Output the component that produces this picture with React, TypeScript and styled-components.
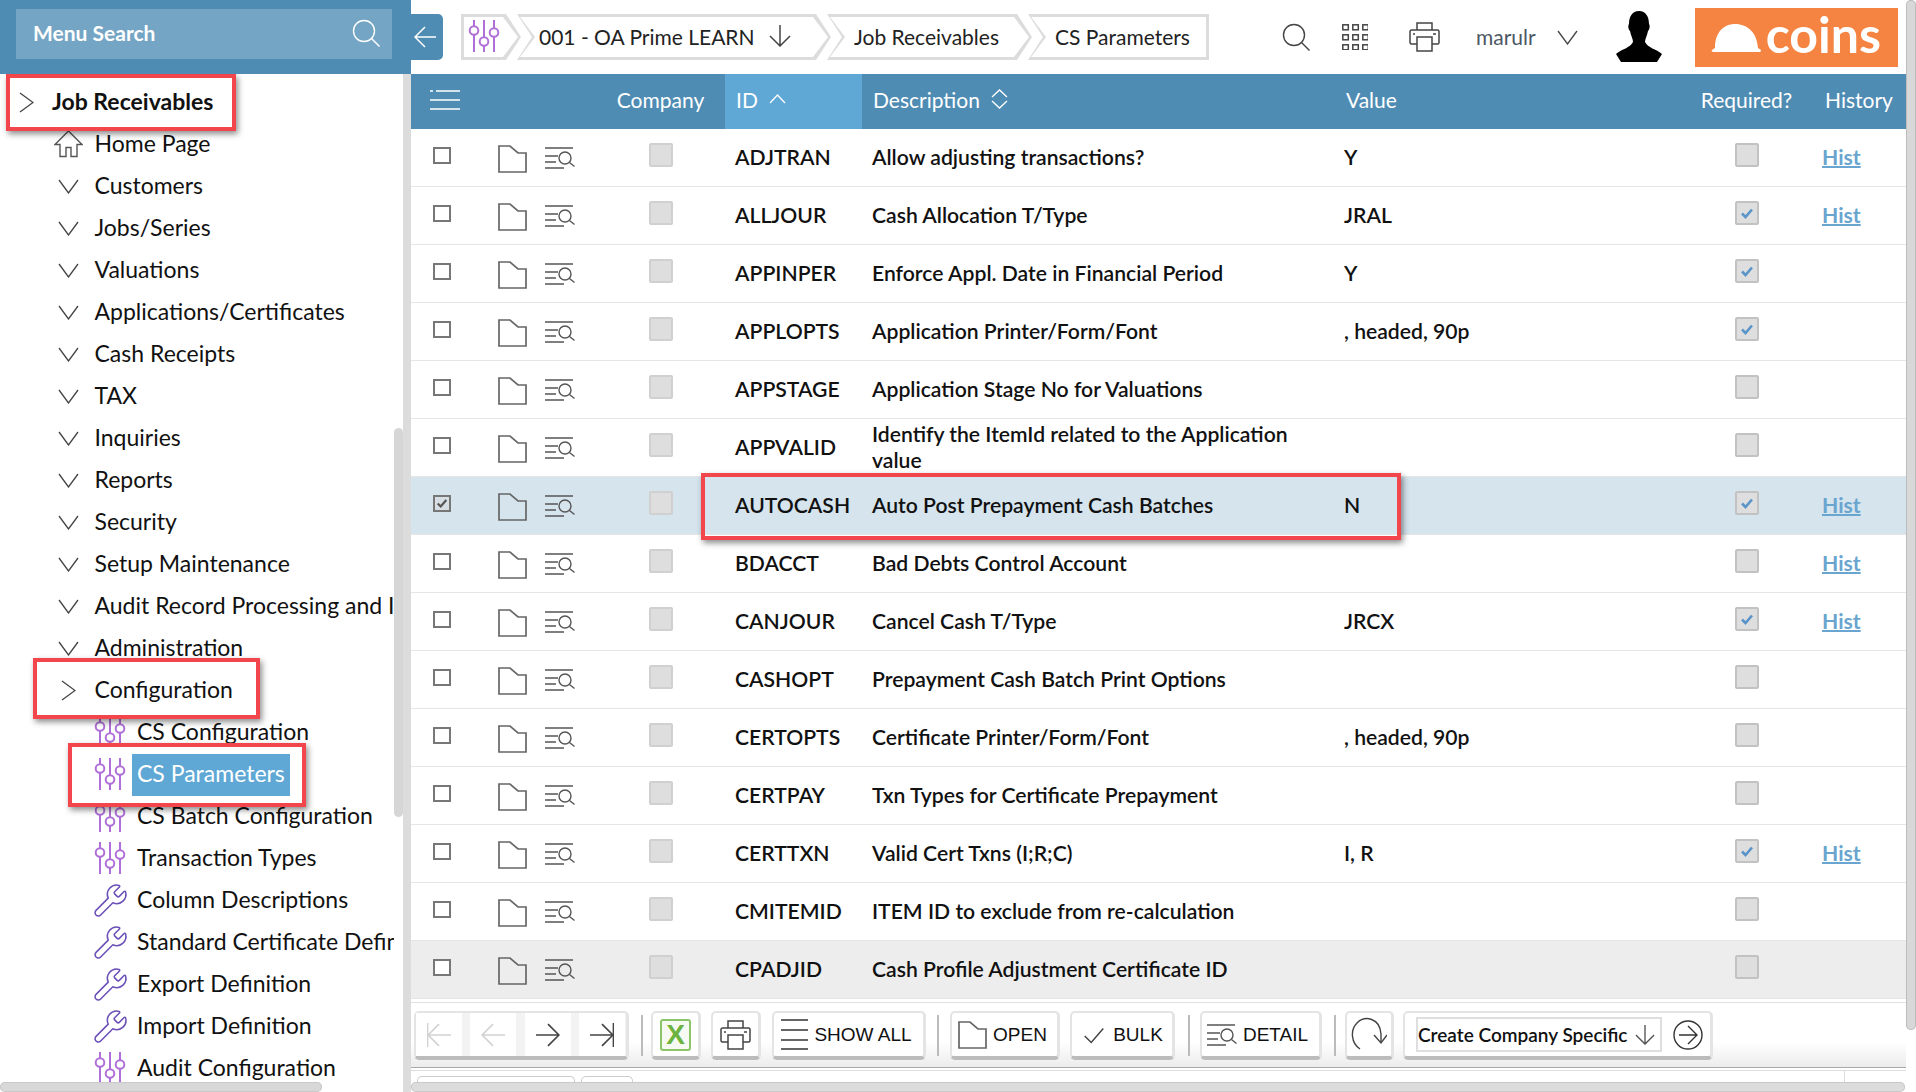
import { Fragment } from 'react';
import styled, { createGlobalStyle, css } from 'styled-components';
import { Wrench } from 'lucide-react';

const GlobalStyle = createGlobalStyle`
	html, body {
		margin: 0;
		padding: 0;
		background: #fff;
		overflow: hidden;
		font-family: Lato, "Liberation Sans", sans-serif;
	}
	*, *::before, *::after {
		box-sizing: border-box;
	}
`;

const RED_BOX = css`
	border: 4px solid #f2464c;
	box-shadow: 2px 3px 6px rgba(0, 0, 0, 0.45);
`;

const Page = styled.div`
	display: flex;
	width: 1916px;
	height: 1092px;
	overflow: hidden;
`;

/* ---- sidebar ---- */
const Sidebar = styled.aside`
	position: relative;
	display: flex;
	flex-direction: column;
	flex: 0 0 411px;
	height: 100%;
`;
const SideHeader = styled.div`
	flex: 0 0 74px;
	padding: 9px 19px 15px 16px;
	background: #4f8cb3;
`;
const SearchBox = styled.div`
	display: flex;
	align-items: center;
	justify-content: space-between;
	height: 50px;
	padding: 0 12px 3px 17px;
	background: #74a5c4;
	color: #fff;
	font-size: 21px;
	font-weight: 700;
`;
const SideBody = styled.div`
	display: flex;
	flex: 1;
	min-height: 0;
`;
const Tree = styled.ul`
	flex: 0 0 394px;
	margin: 0;
	padding: 7px 0 0;
	list-style: none;
	overflow: hidden;
`;
const TreeRow = styled.li<{ $level: number; $boxed?: number[] }>`
	position: relative;
	display: flex;
	align-items: center;
	height: 42px;
	padding-left: ${(p) => p.$level * 42.5}px;
	color: #111;
	font-size: 23px;
	white-space: nowrap;
	${(p) =>
		p.$boxed &&
		css`
			z-index: 1;
			&::before {
				content: '';
				position: absolute;
				z-index: -1;
				left: ${p.$boxed[0]}px;
				width: ${p.$boxed[1]}px;
				top: ${p.$boxed[2]}px;
				bottom: ${p.$boxed[3]}px;
				background: #fff;
				${RED_BOX}
			}
		`}
`;
const TreeIcon = styled.span<{ $nudge?: number }>`
	display: flex;
	flex: 0 0 52px;
	align-items: center;
	justify-content: center;
	padding-right: ${(p) => p.$nudge ?? 0}px;
`;
const TreeLabel = styled.span<{ $strong?: boolean; $active?: boolean }>`
	margin: 2px 0 0 -5px;
	padding: 0 5px 4px;
	font-weight: ${(p) => (p.$strong ? 700 : 400)};
	line-height: 38px;
	${(p) =>
		p.$active &&
		css`
			background: #5fa8d6;
			color: #fff;
		`}
`;
const SideThumbTrack = styled.div`
	flex: 0 0 9px;
	padding-top: 354px;
`;
const SideThumb = styled.div`
	height: 389px;
	background: #d6d6d6;
	border-radius: 5px;
`;
const SideTrack = styled.div`
	flex: 0 0 8px;
	background: #dcdcdc;
`;
const SideHScroll = styled.div`
	position: absolute;
	z-index: 3;
	left: 0;
	bottom: 0;
	width: 322px;
	height: 10px;
	background: #d8d8d8;
	border-radius: 5px;
	box-shadow: inset 0 0 0 1px #c9c9c9;
`;

/* ---- main column ---- */
const Main = styled.main`
	display: flex;
	flex: 1;
	min-width: 0;
`;
const MainInner = styled.div`
	display: flex;
	flex-direction: column;
	flex: 1;
	min-width: 0;
`;
const MainScroll = styled.div`
	flex: 0 0 10px;
`;
const MainThumb = styled.div`
	height: 1030px;
	background: #d8d8d8;
	border-radius: 5px;
	box-shadow: inset 0 0 0 1px #bdbdbd;
`;

const TopBar = styled.header`
	display: flex;
	align-items: flex-start;
	flex: 0 0 74px;
	padding-top: 14px;
`;
const BackTab = styled.div`
	display: flex;
	align-items: center;
	justify-content: center;
	width: 32px;
	height: 46px;
	padding-right: 5px;
	background: #4f8cb3;
	border-radius: 0 5px 5px 0;
`;
const Crumbs = styled.nav`
	display: flex;
	margin-left: 18px;
`;
const Crumb = styled.div<{ $width: number; $pad: number; $first?: boolean; $last?: boolean }>`
	position: relative;
	isolation: isolate;
	display: flex;
	align-items: center;
	width: ${(p) => p.$width}px;
	height: 46px;
	margin-right: -4px;
	padding: 0 0 2px ${(p) => p.$pad}px;
	color: #222;
	font-size: 21px;
	background: #dcdcdc;
	clip-path: polygon(
		0 0,
		${(p) => (p.$last ? '100% 0, 100% 100%' : 'calc(100% - 15px) 0, 100% 50%, calc(100% - 15px) 100%')},
		0 100%,
		${(p) => (p.$first ? '0' : '15px')} 50%
	);
	&::before {
		content: '';
		position: absolute;
		z-index: -1;
		inset: 3px;
		background: #fff;
		clip-path: polygon(
			0 0,
			${(p) => (p.$last ? '100% 0, 100% 100%' : 'calc(100% - 15px) 0, 100% 50%, calc(100% - 15px) 100%')},
			0 100%,
			${(p) => (p.$first ? '0' : '15px')} 50%
		);
	}
`;
const CrumbArrow = styled.span`
	display: flex;
	margin-left: 14px;
`;
const TopTools = styled.div`
	display: flex;
	align-items: center;
	height: 46px;
	margin-left: 77px;
`;
const TopIcon = styled.span<{ $gap: number }>`
	display: flex;
	margin-right: ${(p) => p.$gap}px;
`;
const UserName = styled.span`
	margin: -1px 21px 0 0;
	color: #4c5864;
	font-size: 21px;
`;
const Logo = styled.div`
	display: flex;
	align-items: center;
	width: 203px;
	height: 59px;
	margin: 1px 0 0 33px;
	padding-left: 16px;
	background: #f58442;
	color: #fff;
	font-size: 50px;
	font-weight: 700;
	line-height: 1;
`;
const LogoText = styled.span`
	margin: -8px 0 0 4px;
`;

/* ---- table ---- */
const GRID = css`
	display: grid;
	grid-template-columns: 87px 47px 51px 129px 137px 472px 356px 113px 103px;
	align-items: center;
`;
const HeaderRow = styled.div`
	${GRID}
	flex: 0 0 55px;
	background: #4f8cb3;
	color: #fff;
	font-size: 21px;
`;
const HeadCell = styled.div<{ $center?: boolean; $pad?: number; $sorted?: boolean; $span?: number }>`
	display: flex;
	align-items: center;
	height: 55px;
	padding: 0 0 4px ${(p) => p.$pad ?? 0}px;
	justify-content: ${(p) => (p.$center ? 'center' : 'flex-start')};
	${(p) => p.$span && `grid-column: span ${p.$span};`}
	${(p) => p.$sorted && 'background: #5fa8d6;'}
`;
const SortIcon = styled.span`
	display: flex;
	margin: -2px 0 0 11px;
`;
const Rows = styled.div`
	display: flex;
	flex-direction: column;
`;
const Row = styled.div<{ $selected?: boolean; $hover?: boolean }>`
	${GRID}
	position: relative;
	height: 58px;
	border-bottom: 1px solid #e6e6e6;
	color: #111;
	font-size: 21.15px;
	font-weight: 600;
	background: ${(p) => (p.$selected ? '#d5e4ed' : p.$hover ? '#ededed' : '#fff')};
`;
const RowBox = styled.div`
	position: absolute;
	z-index: 2;
	left: 290px;
	top: -4px;
	width: 700px;
	height: 67px;
	${RED_BOX}
`;
const SelectBox = styled.span<{ $checked?: boolean }>`
	display: flex;
	align-items: center;
	justify-content: center;
	width: 18px;
	height: 17px;
	margin: -5px 0 0 22px;
	border: 2px solid #777;
	background: ${(p) => (p.$checked ? '#d8dfe4' : '#fff')};
`;
const FolderCell = styled.span`
	display: flex;
	margin-top: 2px;
`;
const DetailCell = styled.span`
	display: flex;
	margin-top: 1px;
`;
const GreyBoxCell = styled.div`
	display: flex;
	justify-content: center;
`;
const GreyBox = styled.span<{ $dark?: boolean }>`
	display: flex;
	align-items: center;
	justify-content: center;
	width: 24px;
	height: 24px;
	margin-top: -6px;
	background: #dedede;
	border: 2px solid ${(p) => (p.$dark ? '#c2c2c2' : '#d0d0d0')};
	border-radius: 2px;
`;
const IdCell = styled.div`
	margin-top: -1px;
	padding-left: 10px;
`;
const DescCell = styled.div`
	padding: 0 40px 0 10px;
	line-height: 25.5px;
`;
const ValueCell = styled.div`
	margin-top: -2px;
	padding-left: 10px;
`;
const HistCell = styled.a`
	margin: -2px 0 0 19px;
	color: #6aa5cf;
	text-decoration: underline;
	text-decoration-thickness: 2px;
	font-weight: 700;
`;

/* ---- bottom toolbar ---- */
const Toolbar = styled.div`
	display: flex;
	align-items: flex-start;
	flex: 0 0 66px;
	margin-top: 3px;
	padding: 8px 0 0 3px;
	border-top: 1px solid #e0e0e0;
	border-bottom: 1px solid #aaa;
	background: linear-gradient(#fff 60%, #ececec);
`;
const ToolButton = styled.div<{ $width: number; $gap?: number; $trim?: number }>`
	display: flex;
	align-items: center;
	justify-content: center;
	gap: 6px;
	width: ${(p) => p.$width}px;
	height: 49px;
	margin-right: ${(p) => p.$gap ?? 10}px;
	padding-right: ${(p) => p.$trim ?? 0}px;
	background: #fff;
	border: 2px solid #e4e4e4;
	border-bottom: 4px solid #bcbcbc;
	border-right-width: 3px;
	border-radius: 5px;
	color: #111;
	font-family: "Liberation Sans", Arial, sans-serif;
	font-size: 19px;
`;
const NavGroup = styled(ToolButton)`
	justify-content: space-between;
	gap: 0;
	padding: 0 1px 0 0;
	background: #f3f3f3;
`;
const NavCell = styled.span`
	display: flex;
	align-items: center;
	justify-content: center;
	width: 46px;
	height: 43px;
	background: #fff;
`;
const ToolSep = styled.span<{ $gap: number }>`
	flex: 0 0 2px;
	height: 41px;
	margin: 4px ${(p) => p.$gap}px 0 0;
	background: #bbb;
`;
const ExcelBadge = styled.span`
	display: flex;
	align-items: center;
	justify-content: center;
	width: 31px;
	height: 32px;
	border: 2px solid #8cc46a;
	border-radius: 3px;
	background: #f6faf2;
	color: #6db33f;
	font-size: 28px;
	font-weight: 700;
`;
const ActionGroup = styled(ToolButton)`
	justify-content: flex-start;
	gap: 11px;
	padding-left: 11px;
	margin: 0;
`;
const ActionSelect = styled.span`
	display: flex;
	align-items: center;
	justify-content: space-between;
	width: 246px;
	height: 35px;
	padding: 0 5px 0 0;
	border: 2px solid #dedede;
	font-family: Lato, sans-serif;
	font-size: 19px;
	font-weight: 600;
`;
const UnderBar = styled.div`
	position: relative;
	display: flex;
	flex: 1;
	align-items: flex-end;
	gap: 6px;
	margin-top: 2px;
	padding: 0 0 10px 6px;
	border-top: 1px solid #ddd;
	overflow: hidden;
`;
const StubTab = styled.span<{ $width: number }>`
	width: ${(p) => p.$width}px;
	height: 6px;
	border: 1px solid #ccc;
	border-bottom: 0;
	border-radius: 5px 5px 0 0;
`;
const CornerLine = styled.span`
	position: absolute;
	left: 1433px;
	top: 0;
	width: 1px;
	height: 14px;
	background: #ddd;
`;
const MainHScroll = styled.div`
	position: absolute;
	left: 0;
	right: 1px;
	bottom: 0;
	height: 10px;
	background: #dcdcdc;
	border-radius: 5px;
	box-shadow: inset 0 0 0 1px #c9c9c9;
`;

/* ---- drawings ---- */
function Sliders() {
	return (
		<svg width="32" height="32" viewBox="0 0 32 32" fill="none" stroke="#b06fd8" strokeWidth="2">
			<path d="M6 0v6M6 15v17M16 0v17M16 26v6M26 0v8M26 17v15" />
			<circle cx="6" cy="10.5" r="4.3" />
			<circle cx="16" cy="21.5" r="4.3" />
			<circle cx="26" cy="12.5" r="4.3" />
		</svg>
	);
}

function House() {
	return (
		<svg width="29" height="28" viewBox="0 0 29 28" fill="none" stroke="#555" strokeWidth="1.4">
			<path d="M14.5 1 L1 14.5 H6 V26.5 H12 V17.5 H17 V26.5 H23 V14.5 H28 Z" />
		</svg>
	);
}

function ChevronGlyph({ dir }: { dir: 'right' | 'down' }) {
	if (dir === 'right') {
		return (
			<svg width="15" height="21" viewBox="0 0 15 21" fill="none" stroke="#444" strokeWidth="1.3">
				<path d="M1 1L14 10.5L1 20" />
			</svg>
		);
	}
	return (
		<svg width="21" height="15" viewBox="0 0 21 15" fill="none" stroke="#444" strokeWidth="1.3">
			<path d="M1 1L10.5 14L20 1" />
		</svg>
	);
}

function Magnifier({ size, color }: { size: number; color: string }) {
	return (
		<svg width={size} height={size} viewBox="0 0 28 28" fill="none" stroke={color} strokeWidth="1.4">
			<circle cx="12" cy="12" r="10.5" />
			<path d="M19.5 19.5 L27.5 27.5" />
		</svg>
	);
}

function Folder() {
	return (
		<svg width="29" height="28" viewBox="0 0 29 28" fill="none" stroke="#666" strokeWidth="1.7">
			<path d="M1 1 H12 L20 8 H28 V27 H1 Z" />
		</svg>
	);
}

function DetailIcon() {
	return (
		<svg width="30" height="22" viewBox="0 0 30 22" fill="none" stroke="#555" strokeWidth="1.4">
			<path d="M0 1H28M0 9H13M0 15H11M0 21H19" />
			<circle cx="20" cy="11" r="6" />
			<path d="M24.5 15.5 L29.5 19.5" />
		</svg>
	);
}

function PrinterIcon() {
	return (
		<svg width="31" height="30" viewBox="0 0 31 30" fill="none" stroke="#444" strokeWidth="1.5">
			<path d="M8 8V1H23V8" />
			<path d="M8 22H2.5A1.5 1.5 0 0 1 1 20.5V9.5A1.5 1.5 0 0 1 2.5 8H28.5A1.5 1.5 0 0 1 30 9.5V20.5A1.5 1.5 0 0 1 28.5 22H23" />
			<path d="M8 15H23V29H8Z" />
			<path d="M4 12H6M24 12H27" />
		</svg>
	);
}

function Arrow({ dir, size = 22, color = '#444', stop }: { dir: 'left' | 'right' | 'down'; size?: number; color?: string; stop?: boolean }) {
	const rotate = dir === 'left' ? 180 : dir === 'down' ? 90 : 0;
	return (
		<svg width={size} height={size} viewBox="0 0 22 22" fill="none" stroke={color} strokeWidth="1.5" style={{ transform: `rotate(${rotate}deg)` }}>
			<path d="M0 11H21M11 1L21 11L11 21" />
			{stop && <path d="M21.5 0V22" />}
		</svg>
	);
}

function Check({ color, size = 14, weight = 2.6 }: { color: string; size?: number; weight?: number }) {
	return (
		<svg width={size} height={size} viewBox="0 0 14 14" fill="none" stroke={color} strokeWidth={weight}>
			<path d="M2 7.5 L5.5 11 L12 3.5" />
		</svg>
	);
}

function Hat() {
	return (
		<svg width="51" height="30" viewBox="0 0 51 30" fill="#fff">
			<path d="M4 25 C4 9 13 1 24 1 C37 1 46 10 47 25 L50 27 C50 29 49 29 48 29 H3 C1 29 0 28 1 27 Z" />
		</svg>
	);
}

function UserSilhouette() {
	return (
		<svg width="46" height="52" viewBox="0 0 46 52" fill="#000">
			<path d="M23 0 C30 0 33 6 33 13 C34 14 34 18 32 20 C31 25 29 28 29 31 C32 37 40 38 46 43 L41 51 H5 L0 43 C6 38 14 37 17 31 C17 28 15 25 14 20 C12 18 12 14 13 13 C13 6 16 0 23 0 Z" />
		</svg>
	);
}

function AppsGrid() {
	const cells = [0, 10, 20];
	return (
		<svg width="26" height="26" viewBox="0 0 26 26" fill="none" stroke="#444" strokeWidth="1.5">
			{cells.map((y) => cells.map((x) => <rect key={`${x}-${y}`} x={x + 0.8} y={y + 0.8} width="5.5" height="5" />))}
		</svg>
	);
}

function ListLines() {
	return (
		<svg width="31" height="20" viewBox="0 0 31 20" fill="none" stroke="#fff" strokeWidth="1.3">
			<path d="M0 1H3M6 1H30M0 10H30M0 19H30" />
		</svg>
	);
}

function ShowAllLines() {
	return (
		<svg width="27" height="31" viewBox="0 0 27 31" fill="none" stroke="#333" strokeWidth="1.5">
			<path d="M0 1H27M0 11H27M0 21H27M0 30H27" />
		</svg>
	);
}

function Refresh() {
	return (
		<svg width="36" height="38" viewBox="0 0 36 38" fill="none" stroke="#444" strokeWidth="1.4">
			<path d="M9 33 C0 27 -1 14 6 7 C14 -1 29 2 30 18 L30 27" />
			<path d="M23 19 L30 27 L36 19" />
		</svg>
	);
}

function CircleArrow() {
	return (
		<svg width="30" height="30" viewBox="0 0 30 30" fill="none" stroke="#333" strokeWidth="1.4">
			<circle cx="15" cy="15" r="14" />
			<path d="M6 15H23M15 6L24 15L15 24" />
		</svg>
	);
}

type TreeItem = { label: string; level: number; icon: 'right' | 'down' | 'home' | 'sliders' | 'wrench'; boxed?: number[] };

/* boxed: left, width, top and bottom of the red annotation round a row */
const treeItems: TreeItem[] = [
	{ label: 'Job Receivables', level: 0, icon: 'right', boxed: [6, 230, -7, -8] },
	{ label: 'Home Page', level: 1, icon: 'home' },
	{ label: 'Customers', level: 1, icon: 'down' },
	{ label: 'Jobs/Series', level: 1, icon: 'down' },
	{ label: 'Valuations', level: 1, icon: 'down' },
	{ label: 'Applications/Certificates', level: 1, icon: 'down' },
	{ label: 'Cash Receipts', level: 1, icon: 'down' },
	{ label: 'TAX', level: 1, icon: 'down' },
	{ label: 'Inquiries', level: 1, icon: 'down' },
	{ label: 'Reports', level: 1, icon: 'down' },
	{ label: 'Security', level: 1, icon: 'down' },
	{ label: 'Setup Maintenance', level: 1, icon: 'down' },
	{ label: 'Audit Record Processing and Inquiry', level: 1, icon: 'down' },
	{ label: 'Administration', level: 1, icon: 'down' },
	{ label: 'Configuration', level: 1, icon: 'right', boxed: [33, 227, -11, -8] },
	{ label: 'CS Configuration', level: 2, icon: 'sliders' },
	{ label: 'CS Parameters', level: 2, icon: 'sliders', boxed: [68, 238, -10, -12] },
	{ label: 'CS Batch Configuration', level: 2, icon: 'sliders' },
	{ label: 'Transaction Types', level: 2, icon: 'sliders' },
	{ label: 'Column Descriptions', level: 2, icon: 'wrench' },
	{ label: 'Standard Certificate Definitions', level: 2, icon: 'wrench' },
	{ label: 'Export Definition', level: 2, icon: 'wrench' },
	{ label: 'Import Definition', level: 2, icon: 'wrench' },
	{ label: 'Audit Configuration', level: 2, icon: 'sliders' },
];

const params = [
	{ id: 'ADJTRAN', desc: 'Allow adjusting transactions?', value: 'Y', required: false, hist: true },
	{ id: 'ALLJOUR', desc: 'Cash Allocation T/Type', value: 'JRAL', required: true, hist: true },
	{ id: 'APPINPER', desc: 'Enforce Appl. Date in Financial Period', value: 'Y', required: true, hist: false },
	{ id: 'APPLOPTS', desc: 'Application Printer/Form/Font', value: ', headed, 90p', required: true, hist: false },
	{ id: 'APPSTAGE', desc: 'Application Stage No for Valuations', value: '', required: false, hist: false },
	{ id: 'APPVALID', desc: 'Identify the ItemId related to the Application value', value: '', required: false, hist: false },
	{ id: 'AUTOCASH', desc: 'Auto Post Prepayment Cash Batches', value: 'N', required: true, hist: true },
	{ id: 'BDACCT', desc: 'Bad Debts Control Account', value: '', required: false, hist: true },
	{ id: 'CANJOUR', desc: 'Cancel Cash T/Type', value: 'JRCX', required: true, hist: true },
	{ id: 'CASHOPT', desc: 'Prepayment Cash Batch Print Options', value: '', required: false, hist: false },
	{ id: 'CERTOPTS', desc: 'Certificate Printer/Form/Font', value: ', headed, 90p', required: false, hist: false },
	{ id: 'CERTPAY', desc: 'Txn Types for Certificate Prepayment', value: '', required: false, hist: false },
	{ id: 'CERTTXN', desc: 'Valid Cert Txns (I;R;C)', value: 'I, R', required: true, hist: true },
	{ id: 'CMITEMID', desc: 'ITEM ID to exclude from re-calculation', value: '', required: false, hist: false },
	{ id: 'CPADJID', desc: 'Cash Profile Adjustment Certificate ID', value: '', required: false, hist: false },
];

function TreeGlyph({ icon }: { icon: TreeItem['icon'] }) {
	if (icon === 'home') return <House />;
	if (icon === 'sliders') return <Sliders />;
	if (icon === 'wrench') return <Wrench size={37} color="#6b50b8" strokeWidth={1} />;
	return <ChevronGlyph dir={icon} />;
}

export default function App() {
	return (
		<Fragment>
			<GlobalStyle />
			<Page>
				<Sidebar>
					<SideHeader>
						<SearchBox>
							Menu Search
							<Magnifier size={28} color="#fff" />
						</SearchBox>
					</SideHeader>
					<SideBody>
						<Tree>
							{treeItems.map((item) => (
								<TreeRow key={item.label} $level={item.level} $boxed={item.boxed}>
									<TreeIcon $nudge={item.level === 2 ? 2 : 0}>
										<TreeGlyph icon={item.icon} />
									</TreeIcon>
									<TreeLabel $strong={item.level === 0} $active={item.label === 'CS Parameters'}>
										{item.label}
									</TreeLabel>
								</TreeRow>
							))}
						</Tree>
						<SideThumbTrack>
							<SideThumb />
						</SideThumbTrack>
						<SideTrack />
					</SideBody>
					<SideHScroll />
				</Sidebar>

				<Main>
					<MainInner>
						<TopBar>
							<BackTab>
								<Arrow dir="left" color="#fff" />
							</BackTab>
							<Crumbs>
								<Crumb $width={60} $pad={7} $first>
									<Sliders />
								</Crumb>
								<Crumb $width={314} $pad={22}>
									001 - OA Prime LEARN
									<CrumbArrow>
										<Arrow dir="down" color="#444" />
									</CrumbArrow>
								</Crumb>
								<Crumb $width={205} $pad={27}>
									Job Receivables
								</Crumb>
								<Crumb $width={181} $pad={27} $last>
									CS Parameters
								</Crumb>
							</Crumbs>
							<TopTools>
								<TopIcon $gap={32}>
									<Magnifier size={28} color="#444" />
								</TopIcon>
								<TopIcon $gap={41}>
									<AppsGrid />
								</TopIcon>
								<TopIcon $gap={36}>
									<PrinterIcon />
								</TopIcon>
								<UserName>marulr</UserName>
								<TopIcon $gap={38}>
									<ChevronGlyph dir="down" />
								</TopIcon>
								<UserSilhouette />
								<Logo>
									<Hat />
									<LogoText>coins</LogoText>
								</Logo>
							</TopTools>
						</TopBar>

						<HeaderRow>
							<HeadCell $pad={19} $span={3}>
								<ListLines />
							</HeadCell>
							<HeadCell $center>Company</HeadCell>
							<HeadCell $sorted $pad={11}>
								ID
								<SortIcon>
									<svg width="17" height="10" viewBox="0 0 17 10" fill="none" stroke="#fff" strokeWidth="1.3">
										<path d="M1 9L8.5 1L16 9" />
									</svg>
								</SortIcon>
							</HeadCell>
							<HeadCell $pad={11}>
								Description
								<SortIcon>
									<svg width="17" height="20" viewBox="0 0 17 20" fill="none" stroke="#fff" strokeWidth="1.3">
										<path d="M1 8L8.5 1L16 8M1 12L8.5 19L16 12" />
									</svg>
								</SortIcon>
							</HeadCell>
							<HeadCell $pad={12}>Value</HeadCell>
							<HeadCell $center>Required?</HeadCell>
							<HeadCell $pad={22}>History</HeadCell>
						</HeaderRow>

						<Rows>
							{params.map((row) => {
								const selected = row.id === 'AUTOCASH';
								return (
									<Row key={row.id} $selected={selected} $hover={row.id === 'CPADJID'}>
										<SelectBox $checked={selected}>{selected && <Check color="#555" size={12} />}</SelectBox>
										<FolderCell>
											<Folder />
										</FolderCell>
										<DetailCell>
											<DetailIcon />
										</DetailCell>
										<GreyBoxCell>
											<GreyBox />
										</GreyBoxCell>
										<IdCell>{row.id}</IdCell>
										<DescCell>{row.desc}</DescCell>
										<ValueCell>{row.value}</ValueCell>
										<GreyBoxCell>
											<GreyBox $dark>{row.required && <Check color="#5b94c9" />}</GreyBox>
										</GreyBoxCell>
										{row.hist ? <HistCell>Hist</HistCell> : <span />}
										{selected && <RowBox />}
									</Row>
								);
							})}
						</Rows>

						<Toolbar>
							<NavGroup $width={215} $gap={12}>
								<NavCell>
									<Arrow dir="left" color="#d2d2d2" size={24} stop />
								</NavCell>
								<NavCell>
									<Arrow dir="left" color="#d2d2d2" size={24} />
								</NavCell>
								<NavCell>
									<Arrow dir="right" color="#444" size={24} />
								</NavCell>
								<NavCell>
									<Arrow dir="right" color="#444" size={24} stop />
								</NavCell>
							</NavGroup>
							<ToolSep $gap={8} />
							<ToolButton $width={50}>
								<ExcelBadge>X</ExcelBadge>
							</ToolButton>
							<ToolButton $width={50} $gap={11}>
								<PrinterIcon />
							</ToolButton>
							<ToolButton $width={154} $gap={11} $trim={4}>
								<ShowAllLines />
								SHOW ALL
							</ToolButton>
							<ToolSep $gap={11} />
							<ToolButton $width={110} $trim={4}>
								<Folder />
								OPEN
							</ToolButton>
							<ToolButton $width={105} $gap={13}>
								<Check color="#444" size={26} weight={0.8} />
								BULK
							</ToolButton>
							<ToolSep $gap={10} />
							<ToolButton $width={122} $gap={12} $trim={6}>
								<DetailIcon />
								DETAIL
							</ToolButton>
							<ToolSep $gap={9} />
							<ToolButton $width={49} $gap={9}>
								<Refresh />
							</ToolButton>
							<ActionGroup $width={310}>
								<ActionSelect>
									Create Company Specific
									<Arrow dir="down" size={20} color="#555" />
								</ActionSelect>
								<CircleArrow />
							</ActionGroup>
						</Toolbar>

						<UnderBar>
							<StubTab $width={158} />
							<StubTab $width={52} />
							<CornerLine />
							<MainHScroll />
						</UnderBar>
					</MainInner>
					<MainScroll>
						<MainThumb />
					</MainScroll>
				</Main>
			</Page>
		</Fragment>
	);
}
